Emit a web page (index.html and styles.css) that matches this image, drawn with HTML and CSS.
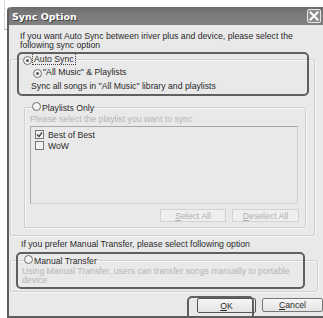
FILE: index.html
```html
<!DOCTYPE html>
<html>
<head>
<meta charset="utf-8">
<link rel="stylesheet" href="styles.css">
</head>
<body>
<div class="deco"></div>
<div class="window">
  <div class="titlebar">
    <span class="title">Sync Option</span>
    <span class="close"><svg width="10" height="10" viewBox="0 0 10 10"><path d="M1.5 1.5 L8.5 8.5 M8.5 1.5 L1.5 8.5" stroke="#fff" stroke-width="2" stroke-linecap="square"/></svg></span>
  </div>
  <div class="body">
    <p class="intro">If you want Auto Sync between iriver plus and device, please select the<br>following sync option</p>
    <fieldset class="group outer">
      <legend class="legend"><span class="radio on"></span><span class="focus">Auto Sync</span></legend>
      <div class="opt"><span class="radio on"></span>"All Music" &amp; Playlists</div>
      <div class="desc">Sync all songs in "All Music" library and playlists</div>
      <fieldset class="group inner">
        <legend class="legend"><span class="radio"></span>Playlists Only</legend>
        <div class="hint">Please select the playlist you want to sync</div>
        <div class="listbox">
          <div class="item"><span class="check"><svg width="7" height="7" viewBox="0 0 7 7"><path d="M1 3.5 L3 5.5 L6 1.5" fill="none" stroke="#444" stroke-width="1.3"/></svg></span>Best of Best</div>
          <div class="item"><span class="check"></span>WoW</div>
        </div>
        <div class="btnrow">
          <span class="btn dis sel"><u>S</u>elect All</span>
          <span class="btn dis desel"><u>D</u>eselect All</span>
        </div>
      </fieldset>
    </fieldset>
    <p class="intro2">If you prefer Manual Transfer, please select following option</p>
    <fieldset class="group manual">
      <legend class="legend"><span class="radio"></span>Manual Transfer</legend>
      <div class="mdesc">Using Manual Transfer, users can transfer songs manually to portable<br>device</div>
    </fieldset>
    <div class="actions">
      <span class="btn ok"><u>O</u>K</span>
      <span class="btn cancel"><u>C</u>ancel</span>
    </div>
  </div>
</div>
<div class="hl hl1"></div>
<div class="hl hl2"></div>
<div class="hl hl3"></div>
</body>
</html>
```
FILE: styles.css
```css
html, body {
  margin: 0;
  padding: 0;
  background: #fff;
  width: 323px;
  height: 318px;
  overflow: hidden;
  font-family: "Liberation Sans", Arial, sans-serif;
  font-size: 8.7px;
  color: #2a2a2a;
}
.deco {
  position: absolute;
  left: 4px;
  top: 0;
  width: 4px;
  height: 29px;
  border-left: 1px solid #d6d6d6;
  border-bottom: 1px solid #b0b0b0;
}
.window {
  position: relative;
  margin: 7px 0 0 7px;
  width: 314px;
  height: 309px;
  background: #e9e9e9;
  border-left: 2px solid #5e5e5e;
  border-bottom: 2px solid #5e5e5e;
  border-radius: 4px 0 0 0;
  display: flex;
  flex-direction: column;
}
.titlebar {
  height: 18px;
  background: linear-gradient(#6b6b6b, #7b7b7b 40%, #808080);
  border-radius: 3px 0 0 0;
  display: flex;
  align-items: center;
  justify-content: space-between;
  padding: 0 0 0 3px;
  flex: none;
}
.title {
  color: #fff;
  font-weight: bold;
  text-shadow: 1px 1px 0 #444;
  font-family: "DejaVu Sans", sans-serif;
  font-size: 9.5px;
}
.close {
  width: 12px;
  height: 12px;
  border: 1px solid #e8e8e8;
  border-radius: 2px;
  background: #8c8c8c;
  margin-right: 2px;
  display: flex;
  align-items: center;
  justify-content: center;
}
.body {
  flex: 1;
  display: flex;
  flex-direction: column;
}
.intro {
  margin: 7px 0 0 11px;
  line-height: 9px;
}
.group {
  margin: 0;
  padding: 0;
  border: 1px solid #cfcfcf;
  box-shadow: inset 1px 1px 0 #f7f7f7, 1px 1px 0 #f7f7f7;
  border-radius: 2px;
  min-width: 0;
}
.legend {
  padding: 0;
  white-space: nowrap;
  line-height: 10px;
  height: 10px;
}
.radio {
  width: 7px;
  height: 7px;
  border: 1px solid #707070;
  border-radius: 50%;
  background: #f4f4f4;
  display: inline-flex;
  align-items: center;
  justify-content: center;
  margin-right: 1px;
  vertical-align: 0;
}
.radio.on::after {
  content: "";
  width: 3px;
  height: 3px;
  border-radius: 50%;
  background: #555;
}
.focus {
  outline: 1px dotted #444;
  padding: 0 1px;
}
.outer {
  margin: 4px 0 0 1px;
  width: 305px;
  box-sizing: border-box;
  padding-bottom: 7px;
}
.outer > .legend {
  margin-left: 12px;
}
.opt {
  margin: 3px 0 0 22px;
  height: 10px;
  line-height: 10px;
  white-space: nowrap;
}
.desc {
  margin: 4px 0 0 20px;
  height: 10px;
  line-height: 10px;
}
.inner {
  margin: 11px 0 0 13px;
  width: 282px;
  box-sizing: border-box;
  padding-bottom: 5px;
}
.inner > .legend {
  margin-left: 7px;
}
.hint {
  color: #b5b5b5;
  margin: 2px 0 0 5px;
  line-height: 10px;
}
.listbox {
  margin: 2px 0 0 5px;
  width: 268px;
  height: 78px;
  border: 1px solid #a8a8a8;
  border-right-color: #d0d0d0;
  border-bottom-color: #d0d0d0;
  padding: 2px 0 0 4px;
  box-sizing: border-box;
}
.item {
  display: flex;
  align-items: center;
  height: 11px;
}
.check {
  width: 7px;
  height: 7px;
  border: 1px solid #777;
  background: #f2f2f2;
  margin-right: 4px;
  display: inline-flex;
  align-items: center;
  justify-content: center;
}
.btnrow {
  display: flex;
  justify-content: flex-end;
  gap: 6px;
  margin: 5px 6px 0 0;
}
.btn {
  display: inline-flex;
  align-items: center;
  justify-content: center;
  box-sizing: border-box;
  height: 13px;
  border: 1px solid #d2d2d2;
  background: #efefef;
}
.btn.dis {
  color: #b0b0b0;
}
.sel { width: 66px; }
.desel { width: 67px; }
.intro2 {
  margin: 3px 0 0 12px;
  line-height: 10px;
}
.manual {
  margin: 6px 0 0 1px;
  width: 308px;
  box-sizing: border-box;
  padding-bottom: 6px;
}
.manual > .legend {
  margin-left: 13px;
}
.mdesc {
  color: #b5b5b5;
  margin: 2px 0 0 11px;
  line-height: 9px;
}
.actions {
  display: flex;
  justify-content: flex-end;
  gap: 6px;
  margin: 6px 0 0 0;
}
.ok {
  width: 59px;
  height: 15px;
  border: 1px solid #555;
  border-radius: 2px;
  background: linear-gradient(#f6f6f6, #e4e4e4);
}
.cancel {
  width: 61px;
  height: 14px;
  border: 1px solid #777;
  border-radius: 2px;
  background: linear-gradient(#f6f6f6, #e4e4e4);
}
.hl {
  position: absolute;
  border: 2px solid #5f5f5f;
  border-radius: 5px;
  box-sizing: border-box;
}
.hl1 { left: 17px; top: 52px; width: 292px; height: 44px; }
.hl2 { left: 16px; top: 252px; width: 289px; height: 37px; }
.hl3 { left: 187px; top: 296px; width: 67px; height: 24px; }
```
